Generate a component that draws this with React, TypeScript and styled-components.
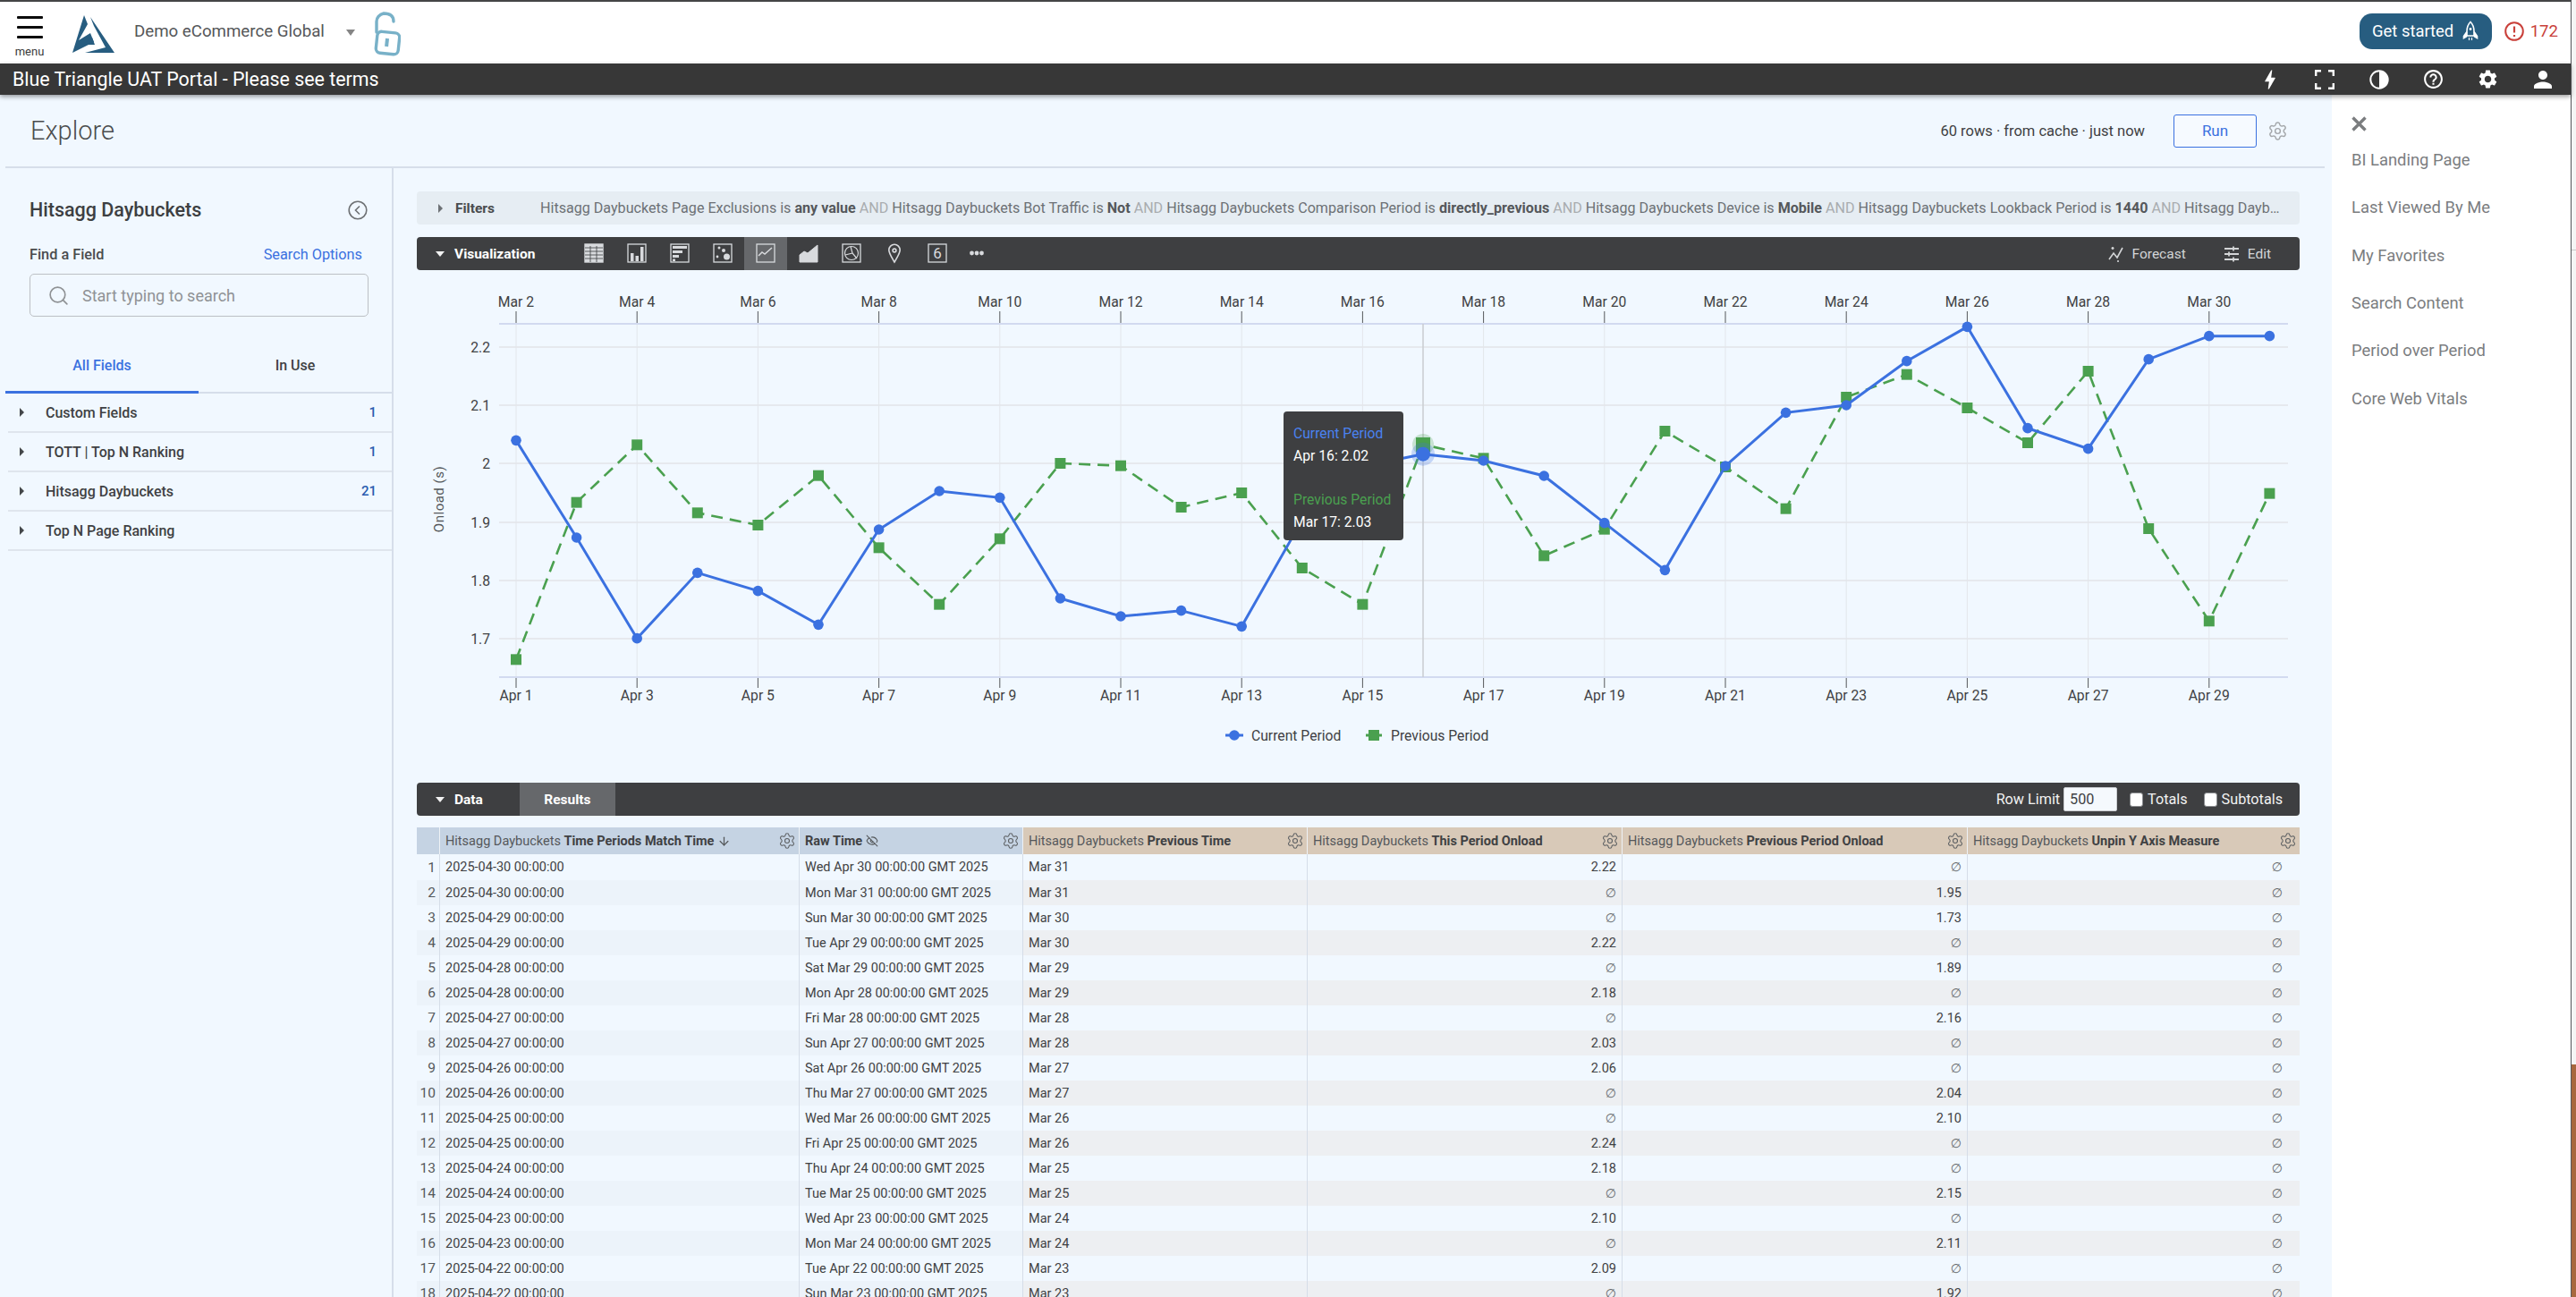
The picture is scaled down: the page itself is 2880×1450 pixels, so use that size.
import React from 'react';
import styled, { createGlobalStyle } from 'styled-components';
import { ArrowDown, EyeOff, Search, Settings } from 'lucide-react';
import { MdBolt, MdHelpOutline, MdPerson, MdSettings } from 'react-icons/md';

const GlobalStyle = createGlobalStyle`
  html, body {
    margin: 0;
    padding: 0;
    width: 2880px;
    height: 1450px;
    overflow: hidden;
    background: #f7f7f7;
    font-family: Roboto, 'Liberation Sans', sans-serif;
  }
  * { box-sizing: border-box; }
`;

const Page = styled.div`
  display: flex;
  width: 2880px;
  height: 1450px;
  overflow: hidden;
`;
const Window = styled.div`
  display: flex;
  flex-direction: column;
  width: 2875px;
  height: 1450px;
  border-top: 2px solid #444546;
  border-right: 1px solid #55585c;
  background: #fff;
`;
const EdgeStrip = styled.div`
  flex: 1;
  display: flex;
  flex-direction: column;
  background: #f5f5f5;
`;
const EdgeTop = styled.div`
  height: 280px;
  border-bottom: 1px solid #c9c9c9;
`;
const EdgeFill = styled.div`
  flex: 1;
`;
const EdgeBottom = styled.div`
  height: 260px;
  background: #a8683e;
`;

/* ---- header ---- */
const Header = styled.header`
  height: 69px;
  flex: none;
  display: flex;
  align-items: center;
  padding: 0 14px 0 18px;
  background: #fff;
`;
const MenuButton = styled.div`
  width: 30px;
  align-self: flex-start;
  margin-top: 16px;
  display: flex;
  flex-direction: column;
  align-items: center;
`;
const MenuLine = styled.span`
  display: block;
  width: 29px;
  height: 3px;
  margin-bottom: 8px;
  background: #0c0c0c;
  border-radius: 1px;
`;
const MenuLabel = styled.span`
  font-size: 13px;
  line-height: 13px;
  color: #3a3a3a;
`;
const LogoMark = styled.svg`
  width: 47px;
  height: 42px;
  margin-left: 33px;
  margin-top: 3px;
`;
const AccountName = styled.span`
  margin-left: 22px;
  margin-top: -3px;
  font-size: 18.7px;
  color: #555759;
  white-space: nowrap;
`;
const AccountCaret = styled.span`
  width: 0;
  height: 0;
  margin-left: 24px;
  border-left: 5px solid transparent;
  border-right: 5px solid transparent;
  border-top: 7px solid #858585;
`;
const Padlock = styled.svg`
  width: 30px;
  height: 50px;
  margin-left: 21px;
  margin-top: 3px;
`;
const GetStarted = styled.div`
  margin-left: auto;
  width: 148px;
  height: 40px;
  margin-top: -4px;
  display: flex;
  align-items: center;
  justify-content: center;
  gap: 10px;
  background: #275d80;
  border-radius: 14px;
  color: #fff;
  font-size: 18.4px;
`;
const AlertCount = styled.div`
  display: flex;
  align-items: center;
  gap: 7px;
  margin-left: 14px;
  margin-top: -4px;
  color: #c9403a;
  font-size: 18.6px;
`;

const InfoBar = styled.div`
  height: 35px;
  flex: none;
  position: relative;
  z-index: 2;
  display: flex;
  align-items: center;
  padding-left: 14px;
  background: #373737;
  box-shadow: 0 2px 5px rgba(0, 0, 0, 0.4);
`;
const InfoTitle = styled.span`
  color: #fff;
  font-size: 21.4px;
  white-space: nowrap;
`;
const InfoIcons = styled.div`
  margin-left: auto;
  padding-right: 1px;
  display: flex;
`;
const InfoIcon = styled.span`
  width: 61px;
  display: flex;
  align-items: center;
  justify-content: center;
  color: #fff;
`;

/* ---- body ---- */
const Body = styled.div`
  flex: 1;
  min-height: 0;
  display: flex;
  overflow: hidden;
`;
const Main = styled.main`
  width: 2607px;
  flex: none;
  display: flex;
  flex-direction: column;
  background: #f1f8ff;
`;
const PageHead = styled.div`
  height: 82px;
  flex: none;
  margin: 0 8px 0 6px;
  padding: 0 41px 0 28px;
  display: flex;
  align-items: center;
  border-bottom: 2px solid #d6deea;
`;
const PageTitle = styled.h1`
  margin: 0;
  font-size: 29px;
  font-weight: 300;
  color: #4a4c4e;
`;
const RunInfo = styled.span`
  margin-left: auto;
  font-size: 16.5px;
  color: #3f4143;
`;
const RunButton = styled.div`
  width: 93px;
  height: 37px;
  margin-left: 32px;
  display: flex;
  align-items: center;
  justify-content: center;
  border: 1.5px solid #3b71e0;
  border-radius: 3px;
  background: #f6faff;
  color: #3b71e0;
  font-size: 17px;
`;
const RunGear = styled.span`
  display: flex;
  margin-left: 12px;
  color: #a4a7aa;
`;

const Workspace = styled.div`
  flex: 1;
  min-height: 0;
  display: flex;
`;

/* ---- field picker ---- */
const FieldPanel = styled.aside`
  width: 440px;
  flex: none;
  border-right: 2px solid #d6deea;
`;
const PanelHead = styled.div`
  display: flex;
  align-items: center;
  justify-content: space-between;
  padding: 33px 27px 0 33px;
  height: 60px;
`;
const PanelTitle = styled.h2`
  margin: 0;
  font-size: 21.5px;
  font-weight: 500;
  color: #3d3f42;
`;
const BackCircle = styled.svg`
  width: 22px;
  height: 22px;
`;
const FindRow = styled.div`
  display: flex;
  justify-content: space-between;
  align-items: center;
  height: 22px;
  margin: 25px 33px 0 33px;
  font-size: 16.3px;
`;
const FindLabel = styled.span`
  font-weight: 500;
  color: #4a4c4e;
`;
const FindLink = styled.span`
  color: #3b71e0;
`;
const SearchBox = styled.div`
  height: 48px;
  margin: 11px 26px 0 33px;
  padding-left: 19px;
  display: flex;
  align-items: center;
  gap: 14px;
  border: 1.5px solid #bcc0c4;
  border-radius: 5px;
  color: #8f9295;
  font-size: 18px;
`;
const Tabs = styled.div`
  display: flex;
  height: 86px;
  margin-left: 6px;
  border-bottom: 2px solid #d6deea;
`;
const Tab = styled.div<{ $active?: boolean }>`
  width: 216px;
  height: 86px;
  display: flex;
  align-items: center;
  justify-content: center;
  padding-top: 26px;
  font-size: 16px;
  font-weight: 500;
  color: ${(p) => (p.$active ? '#3b71e0' : '#3f4143')};
  border-bottom: 3px solid ${(p) => (p.$active ? '#3b71e0' : 'transparent')};
`;
const FieldGroup = styled.div`
  height: 44px;
  margin-left: 9px;
  padding: 0 17px 0 13px;
  display: flex;
  align-items: center;
  border-bottom: 2px solid #dfe5ed;
  font-size: 16px;
  font-weight: 500;
  color: #3f4143;
`;
const RightCaret = styled.span<{ $tone?: string }>`
  width: 0;
  height: 0;
  flex: none;
  border-top: 5px solid transparent;
  border-bottom: 5px solid transparent;
  border-left: 5px solid ${(p) => p.$tone || '#44474a'};
`;
const FieldName = styled.span`
  margin-left: 24px;
`;
const FieldCount = styled.span`
  margin-left: auto;
  color: #2a5cb0;
  font-size: 15px;
`;

/* ---- explore content ---- */
const Content = styled.section`
  flex: 1;
  min-width: 0;
  padding: 26px 36px 0 26px;
  display: flex;
  flex-direction: column;
`;
const FilterBar = styled.div`
  height: 37px;
  flex: none;
  padding: 0 15px 0 24px;
  display: flex;
  align-items: center;
  background: #e6edf3;
  border-radius: 4px;
  font-size: 16.1px;
`;
const FilterTitle = styled.span`
  width: 95px;
  flex: none;
  margin-left: 14px;
  font-weight: 700;
  font-size: 15.5px;
  color: #4a4c4e;
`;
const FilterText = styled.div`
  flex: 1;
  min-width: 0;
  white-space: nowrap;
  overflow: hidden;
  text-overflow: ellipsis;
  color: #6d7175;
  b { font-weight: 700; color: #55585b; }
  i { font-style: normal; color: #a9acaf; }
`;
const SectionBar = styled.div<{ $flush?: boolean }>`
  height: 37px;
  flex: none;
  margin-top: ${(p) => (p.$flush ? '0' : '14px')};
  padding-left: 21px;
  display: flex;
  align-items: center;
  background: #3e3f41;
  border-radius: 4px;
  color: #fff;
  font-size: 15.5px;
`;
const DownCaret = styled.span`
  width: 0;
  height: 0;
  flex: none;
  border-left: 5.5px solid transparent;
  border-right: 5.5px solid transparent;
  border-top: 6.5px solid #f2f2f2;
`;
const SectionTitle = styled.span`
  margin-left: 11px;
  font-weight: 700;
`;
const VizIcons = styled.div`
  display: flex;
  align-items: stretch;
  height: 100%;
  margin-left: 42px;
`;
const VizSlot = styled.span<{ $active?: boolean }>`
  width: 48px;
  display: flex;
  align-items: center;
  justify-content: center;
  padding-bottom: 2px;
  background: ${(p) => (p.$active ? '#66686b' : 'transparent')};
`;
const BarAction = styled.span<{ $first?: boolean }>`
  display: flex;
  align-items: center;
  gap: 9px;
  margin-left: ${(p) => (p.$first ? 'auto' : '42px')};
  margin-right: ${(p) => (p.$first ? '0' : '32px')};
  color: #d3d5d7;
  font-size: 15.5px;
`;

const ChartArea = styled.div`
  position: relative;
  height: 573px;
  flex: none;
`;
const ChartSvg = styled.svg`
  display: block;
  width: 2105px;
  height: 573px;
  font-family: Roboto, 'Liberation Sans', sans-serif;
  font-size: 15.7px;
  fill: #3f4143;
`;
const Tooltip = styled.div`
  position: absolute;
  left: 969px;
  top: 158px;
  width: 134px;
  height: 144px;
  padding: 11.5px 11px 0;
  background: #3e3f41;
  border-radius: 4px;
  font-size: 15.7px;
  line-height: 25px;
  color: #fff;
`;
const TooltipLine = styled.div<{ $color?: string; $gap?: boolean }>`
  color: ${(p) => p.$color || '#fff'};
  margin-top: ${(p) => (p.$gap ? '24px' : '0')};
  white-space: nowrap;
`;

const DataTab = styled.span`
  height: 100%;
  width: 107px;
  margin-left: 41px;
  display: flex;
  align-items: center;
  justify-content: center;
  background: #66686b;
  font-weight: 700;
`;
const RowControls = styled.div`
  margin-left: auto;
  padding-right: 19px;
  display: flex;
  align-items: center;
  color: #f2f2f2;
  font-size: 16.2px;
`;
const LimitInput = styled.span`
  width: 60px;
  height: 27px;
  margin: 0 14px 0 4px;
  padding-left: 6px;
  display: flex;
  align-items: center;
  background: #f5f9fd;
  border: 1px solid #c9ccd0;
  border-radius: 2px;
  color: #3f4143;
`;
const CheckBox = styled.span`
  width: 15px;
  height: 16px;
  margin-right: 5px;
  background: #fff;
  border: 1px solid #8a8c8f;
  border-radius: 3px;
`;
const CheckLabel = styled.span`
  margin-right: 18px;
  &:last-child { margin-right: 0; }
`;

const ResultTable = styled.table`
  flex: none;
  width: 2105px;
  margin-top: 13px;
  border-collapse: separate;
  border-spacing: 0;
  table-layout: fixed;
  font-size: 14.5px;
  color: #3f4143;
`;
const HeadCell = styled.th<{ $measure?: boolean }>`
  height: 30px;
  padding: 0 3px 0 6px;
  text-align: left;
  font-weight: 400;
  color: #55585b;
  white-space: nowrap;
  background: ${(p) => (p.$measure ? '#d8c9b8' : '#c5d3e3')};
  border-left: 1px solid #eef2f6;
  b { font-weight: 700; color: #3f4143; }
  &:first-child { border-left: 0; }
`;
const HeadInner = styled.div`
  display: flex;
  align-items: center;
  gap: 4px;
`;
const HeadGear = styled.span`
  margin-left: auto;
  display: flex;
  color: #5c5f62;
`;
const BodyRow = styled.tr`
  &:first-child td { height: 29px; }
`;
const BodyCell = styled.td<{ $tone: string; $right?: boolean; $pad?: number }>`
  height: 28px;
  padding: 0 ${(p) => p.$pad ?? 6}px 0 6px;
  white-space: nowrap;
  text-align: ${(p) => (p.$right ? 'right' : 'left')};
  background: ${(p) => p.$tone};
  border-left: 1px solid #d5dde8;
  &:first-child { border-left: 0; }
`;
const RowIndex = styled.td<{ $tone: string }>`
  height: 28px;
  padding-right: 4px;
  text-align: right;
  font-size: 15.5px;
  color: #55585b;
  background: ${(p) => p.$tone};
`;
const NullMark = styled.span`
  font-size: 14px;
  color: #66696c;
  font-family: 'DejaVu Sans', sans-serif;
`;

/* ---- right hand nav ---- */
const SideNav = styled.nav`
  flex: 1;
  padding: 24px 0 0 22px;
  background: #fff;
`;
const CloseMark = styled.svg`
  display: block;
  width: 17px;
  height: 17px;
  margin-bottom: 5px;
`;
const NavItem = styled.div`
  height: 53.3px;
  display: flex;
  align-items: center;
  font-size: 18.4px;
  color: #7b7d7f;
`;

/* ---- drawings ---- */
const iconStroke = '#d8dadd';

const Frame = () => <rect x="1" y="1" width="20" height="20" fill="none" stroke={iconStroke} strokeWidth="1.3" />;

const VizIcon: React.FC<{ kind: string }> = ({ kind }) => {
  const inner: Record<string, React.ReactNode> = {
    table: (
      <g stroke={iconStroke} strokeWidth="1.4" fill="none">
        <rect x="1" y="1" width="20" height="20" fill={iconStroke} />
        {[5, 9, 13, 17].map((y) => <line key={y} x1="1" x2="21" y1={y} y2={y} stroke="#3e3f41" strokeWidth="0.8" />)}
        {[7, 14].map((x) => <line key={x} y1="3" y2="21" x1={x} x2={x} stroke="#3e3f41" strokeWidth="0.8" />)}
      </g>
    ),
    bar: (
      <g fill={iconStroke}>
        <Frame />
        <rect x="4" y="11" width="3.5" height="9" />
        <rect x="9.5" y="14" width="3.5" height="6" />
        <rect x="15" y="4" width="3.5" height="16" />
      </g>
    ),
    hbar: (
      <g fill={iconStroke}>
        <Frame />
        <rect x="3" y="3" width="16" height="3" />
        <rect x="3" y="8" width="11" height="3" />
        <rect x="3" y="13" width="7" height="3" />
        <rect x="3" y="17.5" width="3" height="2.5" />
      </g>
    ),
    scatter: (
      <g fill={iconStroke}>
        <Frame />
        <circle cx="7" cy="5" r="1.5" />
        <circle cx="12" cy="8" r="2" />
        <circle cx="5" cy="15" r="1.4" />
        <circle cx="15.5" cy="15" r="3.5" />
      </g>
    ),
    line: (
      <g fill="none" stroke={iconStroke}>
        <Frame />
        <path d="M3 14 L7 10 L10 12 L18 5" strokeWidth="1.5" />
      </g>
    ),
    area: <path d="M1 21 V13 L6 9 L10 11 L21 2 V21 Z" fill={iconStroke} stroke={iconStroke} />,
    pie: (
      <g fill="none" stroke={iconStroke} strokeWidth="1.2">
        <Frame />
        <circle cx="11" cy="11" r="7.5" />
        <path d="M10 3.5 L12 11 L17 17 M12 11 L4 13" />
      </g>
    ),
    pin: (
      <g fill="none" stroke={iconStroke} strokeWidth="1.6">
        <path d="M11 21 C7 14 4.8 11 4.8 7.5 A6.2 6.2 0 0 1 17.2 7.5 C17.2 11 15 14 11 21 Z" />
        <circle cx="11" cy="8" r="1.9" />
      </g>
    ),
    single: (
      <g>
        <Frame />
        <text x="11" y="17" textAnchor="middle" fontSize="17" fill={iconStroke} fontFamily="Roboto">6</text>
      </g>
    ),
    more: (
      <g fill={iconStroke}>
        <circle cx="1.5" cy="11" r="2.4" />
        <circle cx="7" cy="11" r="2.4" />
        <circle cx="12.5" cy="11" r="2.4" />
      </g>
    ),
  };
  return <svg width="22" height="22" viewBox="0 0 22 22" overflow="visible">{inner[kind]}</svg>;
};

const RocketIcon = () => (
  <svg width="18" height="24" viewBox="0 0 18 24" fill="none" stroke="#fff" strokeWidth="1.6">
    <path d="M9 1.5 C12.5 5 13 9 13 12 V17 H5 V12 C5 9 5.5 5 9 1.5 Z" />
    <circle cx="9" cy="9.5" r="1.4" fill="#fff" stroke="none" />
    <path d="M5 12.5 L1.5 17.5 V19.5 L5 17.5 M13 12.5 L16.5 17.5 V19.5 L13 17.5" fill="#fff" />
    <path d="M7.5 19 V22 M10.5 19 V22" strokeWidth="1.2" />
  </svg>
);

const ContrastIcon = () => (
  <svg width="22" height="22" viewBox="0 0 22 22">
    <circle cx="11" cy="11" r="9.7" fill="none" stroke="#fff" strokeWidth="2" />
    <path d="M11 1.3 A9.7 9.7 0 0 1 11 20.7 Z" fill="#fff" />
  </svg>
);

const FullscreenIcon = () => (
  <svg width="22" height="22" viewBox="0 0 22 22" fill="none" stroke="#fff" strokeWidth="2.4">
    <path d="M1.2 7 V1.2 H7 M15 1.2 H20.8 V7 M20.8 15 V20.8 H15 M7 20.8 H1.2 V15" />
  </svg>
);

const dayX = (day: number) => 577 + (day - 1) * 67.6;
const zoomY = (z: number) => 350 + z / 3;

const currentPeriod = [433, 759, 1097, 877, 938, 1051, 732, 603, 625, 963, 1023, 1004, 1057, 700, 520, 479, 501, 552, 710, 868, 519, 340, 315, 167, 52, 392, 461, 161, 83, 83];
const previousPeriod = [1168, 641, 448, 676, 717, 551, 793, 983, 763, 510, 518, 657, 609, 861, 983, 447, 493, 820, 731, 402, 522, 662, 288, 212, 324, 441, 201, 729, 1039, 611];
const yTicks: [string, number][] = [['2.2', 390], ['2.1', 455], ['2', 520], ['1.9', 586], ['1.8', 651], ['1.7', 716]];
const BLUE = '#3b71e0';
const GREEN = '#4aa04f';

const toPoints = (list: number[]) => list.map((z, i) => `${dayX(i + 1)},${zoomY(z)}`).join(' ');

const PeriodChart = () => {
  const odd = Array.from({ length: 15 }, (_, i) => i * 2 + 1);
  return (
    <ChartSvg viewBox="466 304 2105 573">
      {yTicks.map(([label, y]) => (
        <g key={label}>
          <line x1="558" x2="2558" y1={y} y2={y} stroke="#e6e9ee" strokeWidth="2" />
          <text x="548" y={y + 5.5} textAnchor="end">{label}</text>
        </g>
      ))}
      {odd.map((d) => (
        <g key={d}>
          <line x1={dayX(d)} x2={dayX(d)} y1="364" y2="759" stroke="#e3e6eb" />
          <line x1={dayX(d)} x2={dayX(d)} y1="350" y2="364" stroke="#55585b" />
          <line x1={dayX(d)} x2={dayX(d)} y1="759" y2="771" stroke="#55585b" />
          <text x={dayX(d)} y="345" textAnchor="middle">Mar {d + 1}</text>
          <text x={dayX(d)} y="785" textAnchor="middle">Apr {d}</text>
        </g>
      ))}
      <line x1="558" x2="2558" y1="364" y2="364" stroke="#d2daf0" strokeWidth="2" />
      <line x1="558" x2="2558" y1="759" y2="759" stroke="#d2daf0" strokeWidth="2" />
      <line x1={dayX(16)} x2={dayX(16)} y1="364" y2="759" stroke="#c9ccd0" strokeWidth="1.5" />
      <text transform="translate(496 560) rotate(-90)" textAnchor="middle" fontSize="15" letterSpacing="0.5" fill="#55585b">Onload (s)</text>

      <polyline points={toPoints(previousPeriod)} fill="none" stroke={GREEN} strokeWidth="2.6" strokeDasharray="13 8" />
      {previousPeriod.map((z, i) => (
        <rect key={i} x={dayX(i + 1) - 6} y={zoomY(z) - 6} width="12" height="12" fill={GREEN} />
      ))}
      <polyline points={toPoints(currentPeriod)} fill="none" stroke={BLUE} strokeWidth="3" />
      {currentPeriod.map((z, i) => (
        <circle key={i} cx={dayX(i + 1)} cy={zoomY(z)} r="5.8" fill={BLUE} />
      ))}
      <circle cx={dayX(16)} cy={zoomY(447)} r="12" fill={GREEN} opacity="0.25" />
      <rect x={dayX(16) - 8} y={zoomY(447) - 8} width="16" height="16" fill={GREEN} />
      <circle cx={dayX(16)} cy={zoomY(479)} r="13" fill={BLUE} opacity="0.25" />
      <circle cx={dayX(16)} cy={zoomY(479)} r="8" fill={BLUE} />

      <line x1="1370" x2="1390" y1="824" y2="824" stroke={BLUE} strokeWidth="3" />
      <circle cx="1380" cy="824" r="5.8" fill={BLUE} />
      <text x="1399" y="829.5">Current Period</text>
      <line x1="1527" x2="1546" y1="824" y2="824" stroke={GREEN} strokeWidth="3" strokeDasharray="3 2" />
      <rect x="1530" y="818" width="12" height="12" fill={GREEN} />
      <text x="1555" y="829.5">Previous Period</text>
    </ChartSvg>
  );
};

type Row = [string, string, string, string, string];
const rows: Row[] = [
  ['2025-04-30', 'Wed Apr 30', 'Mar 31', '2.22', ''],
  ['2025-04-30', 'Mon Mar 31', 'Mar 31', '', '1.95'],
  ['2025-04-29', 'Sun Mar 30', 'Mar 30', '', '1.73'],
  ['2025-04-29', 'Tue Apr 29', 'Mar 30', '2.22', ''],
  ['2025-04-28', 'Sat Mar 29', 'Mar 29', '', '1.89'],
  ['2025-04-28', 'Mon Apr 28', 'Mar 29', '2.18', ''],
  ['2025-04-27', 'Fri Mar 28', 'Mar 28', '', '2.16'],
  ['2025-04-27', 'Sun Apr 27', 'Mar 28', '2.03', ''],
  ['2025-04-26', 'Sat Apr 26', 'Mar 27', '2.06', ''],
  ['2025-04-26', 'Thu Mar 27', 'Mar 27', '', '2.04'],
  ['2025-04-25', 'Wed Mar 26', 'Mar 26', '', '2.10'],
  ['2025-04-25', 'Fri Apr 25', 'Mar 26', '2.24', ''],
  ['2025-04-24', 'Thu Apr 24', 'Mar 25', '2.18', ''],
  ['2025-04-24', 'Tue Mar 25', 'Mar 25', '', '2.15'],
  ['2025-04-23', 'Wed Apr 23', 'Mar 24', '2.10', ''],
  ['2025-04-23', 'Mon Mar 24', 'Mar 24', '', '2.11'],
  ['2025-04-22', 'Tue Apr 22', 'Mar 23', '2.09', ''],
  ['2025-04-22', 'Sun Mar 23', 'Mar 23', '', '1.92'],
];

const Gear = () => (
  <HeadGear>
    <Settings size={20} strokeWidth={1.3} />
  </HeadGear>
);

const Nullable: React.FC<{ value: string }> = ({ value }) => (value ? <>{value}</> : <NullMark>∅</NullMark>);

const fieldGroups: [string, string][] = [
  ['Custom Fields', '1'],
  ['TOTT | Top N Ranking', '1'],
  ['Hitsagg Daybuckets', '21'],
  ['Top N Page Ranking', ''],
];
const navLinks = ['BI Landing Page', 'Last Viewed By Me', 'My Favorites', 'Search Content', 'Period over Period', 'Core Web Vitals'];
const vizKinds = ['table', 'bar', 'hbar', 'scatter', 'line', 'area', 'pie', 'pin', 'single', 'more'];

export default function App() {
  return (
    <>
      <GlobalStyle />
      <Page>
        <Window>
          <Header>
            <MenuButton>
              <MenuLine />
              <MenuLine />
              <MenuLine />
              <MenuLabel>menu</MenuLabel>
            </MenuButton>
            <LogoMark viewBox="0 0 47 42">
              <path d="M13 0 L17 10 L7 28 L20 20 L24 30 L0 42 Z" fill="#275d80" />
              <path d="M20 2 L47 42 L14 42 L37 36 L24 12 Z" fill="#275d80" />
              <path d="M11 33 L22 25 L25 33 Z" fill="#275d80" />
            </LogoMark>
            <AccountName>Demo eCommerce Global</AccountName>
            <AccountCaret />
            <Padlock viewBox="0 0 30 50" fill="none" stroke="#78b1c8" strokeWidth="3.4">
              <path d="M22 11 C22 5 18 2 11 2 C6 3 3 7 3 11 L3 23" strokeLinecap="round" />
              <rect x="3" y="23" width="25" height="24" rx="5" transform="rotate(6 15 35)" />
              <rect x="12.5" y="30" width="4" height="9" fill="#78b1c8" stroke="none" transform="rotate(6 15 35)" />
            </Padlock>
            <GetStarted>
              Get started
              <RocketIcon />
            </GetStarted>
            <AlertCount>
              <svg width="22" height="22" viewBox="0 0 22 22" fill="none" stroke="#c9403a" strokeWidth="2">
                <circle cx="11" cy="11" r="9.8" />
                <path d="M11 5.5 V12.5 M11 15 V17" strokeWidth="2.2" />
              </svg>
              172
            </AlertCount>
          </Header>
          <InfoBar>
            <InfoTitle>Blue Triangle UAT Portal - Please see terms</InfoTitle>
            <InfoIcons>
              <InfoIcon><MdBolt size={28} /></InfoIcon>
              <InfoIcon><FullscreenIcon /></InfoIcon>
              <InfoIcon><ContrastIcon /></InfoIcon>
              <InfoIcon><MdHelpOutline size={25} /></InfoIcon>
              <InfoIcon><MdSettings size={25} /></InfoIcon>
              <InfoIcon><MdPerson size={30} /></InfoIcon>
            </InfoIcons>
          </InfoBar>
          <Body>
            <Main>
              <PageHead>
                <PageTitle>Explore</PageTitle>
                <RunInfo>60 rows · from cache · just now</RunInfo>
                <RunButton>Run</RunButton>
                <RunGear><Settings size={23} strokeWidth={1.5} /></RunGear>
              </PageHead>
              <Workspace>
                <FieldPanel>
                  <PanelHead>
                    <PanelTitle>Hitsagg Daybuckets</PanelTitle>
                    <BackCircle viewBox="0 0 22 22" fill="none" stroke="#6e7174" strokeWidth="1.6">
                      <circle cx="11" cy="11" r="9.8" />
                      <path d="M13 6.5 L8.5 11 L13 15.5" />
                    </BackCircle>
                  </PanelHead>
                  <FindRow>
                    <FindLabel>Find a Field</FindLabel>
                    <FindLink>Search Options</FindLink>
                  </FindRow>
                  <SearchBox>
                    <Search size={25} strokeWidth={1.6} />
                    Start typing to search
                  </SearchBox>
                  <Tabs>
                    <Tab $active>All Fields</Tab>
                    <Tab>In Use</Tab>
                  </Tabs>
                  {fieldGroups.map(([name, count]) => (
                    <FieldGroup key={name}>
                      <RightCaret />
                      <FieldName>{name}</FieldName>
                      <FieldCount>{count}</FieldCount>
                    </FieldGroup>
                  ))}
                </FieldPanel>
                <Content>
                  <FilterBar>
                    <RightCaret $tone="#6d7175" />
                    <FilterTitle>Filters</FilterTitle>
                    <FilterText>
                      Hitsagg Daybuckets Page Exclusions is <b>any value</b> <i>AND</i> Hitsagg Daybuckets Bot Traffic is <b>Not</b> <i>AND</i> Hitsagg Daybuckets Comparison Period is <b>directly_previous</b> <i>AND</i> Hitsagg Daybuckets Device is <b>Mobile</b> <i>AND</i> Hitsagg Daybuckets Lookback Period is <b>1440</b> <i>AND</i> Hitsagg Daybuckets Time Periods Match Time is <b>any value</b>
                    </FilterText>
                  </FilterBar>
                  <SectionBar>
                    <DownCaret />
                    <SectionTitle>Visualization</SectionTitle>
                    <VizIcons>
                      {vizKinds.map((kind) => (
                        <VizSlot key={kind} $active={kind === 'line'}>
                          <VizIcon kind={kind} />
                        </VizSlot>
                      ))}
                    </VizIcons>
                    <BarAction $first>
                      <svg width="18" height="20" viewBox="0 0 18 20" fill="none" stroke="#d3d5d7" strokeWidth="1.6">
                        <path d="M1 16 L6 9 L10 14 L16 3" />
                        <path d="M5 2 L5 5 M3.5 3.5 L6.5 3.5 M11 17 L11 19" />
                      </svg>
                      Forecast
                    </BarAction>
                    <BarAction>
                      <svg width="18" height="20" viewBox="0 0 18 20" fill="none" stroke="#d3d5d7" strokeWidth="1.8">
                        <path d="M1 4 H17 M1 10 H17 M1 16 H17 M11 1.5 V6.5 M6 7.5 V12.5 M11 13.5 V18.5" />
                      </svg>
                      Edit
                    </BarAction>
                  </SectionBar>
                  <ChartArea>
                    <PeriodChart />
                    <Tooltip>
                      <TooltipLine $color="#4a82f0">Current Period</TooltipLine>
                      <TooltipLine>Apr 16: 2.02</TooltipLine>
                      <TooltipLine $color={GREEN} $gap>Previous Period</TooltipLine>
                      <TooltipLine>Mar 17: 2.03</TooltipLine>
                    </Tooltip>
                  </ChartArea>
                  <SectionBar $flush>
                    <DownCaret />
                    <SectionTitle>Data</SectionTitle>
                    <DataTab>Results</DataTab>
                    <RowControls>
                      Row Limit
                      <LimitInput>500</LimitInput>
                      <CheckBox />
                      <CheckLabel>Totals</CheckLabel>
                      <CheckBox />
                      <CheckLabel>Subtotals</CheckLabel>
                    </RowControls>
                  </SectionBar>
                  <ResultTable>
                    <colgroup>
                      <col width="25" />
                      <col width="402" />
                      <col width="250" />
                      <col width="318" />
                      <col width="352" />
                      <col width="386" />
                      <col width="372" />
                    </colgroup>
                    <thead>
                      <tr>
                        <HeadCell />
                        <HeadCell>
                          <HeadInner>
                            <span>Hitsagg Daybuckets <b>Time Periods Match Time</b></span>
                            <ArrowDown size={15} strokeWidth={2} />
                            <Gear />
                          </HeadInner>
                        </HeadCell>
                        <HeadCell>
                          <HeadInner>
                            <b>Raw Time</b>
                            <EyeOff size={14} strokeWidth={1.8} />
                            <Gear />
                          </HeadInner>
                        </HeadCell>
                        <HeadCell $measure>
                          <HeadInner>
                            <span>Hitsagg Daybuckets <b>Previous Time</b></span>
                            <Gear />
                          </HeadInner>
                        </HeadCell>
                        <HeadCell $measure>
                          <HeadInner>
                            <span>Hitsagg Daybuckets <b>This Period Onload</b></span>
                            <Gear />
                          </HeadInner>
                        </HeadCell>
                        <HeadCell $measure>
                          <HeadInner>
                            <span>Hitsagg Daybuckets <b>Previous Period Onload</b></span>
                            <Gear />
                          </HeadInner>
                        </HeadCell>
                        <HeadCell $measure>
                          <HeadInner>
                            <span>Hitsagg Daybuckets <b>Unpin Y Axis Measure</b></span>
                            <Gear />
                          </HeadInner>
                        </HeadCell>
                      </tr>
                    </thead>
                    <tbody>
                      {rows.map((row, i) => {
                        const striped = i % 2 === 1;
                        const dimTone = striped ? '#ecf3fa' : '#f1f8ff';
                        const calcTone = striped ? '#edeff2' : '#f1f8ff';
                        return (
                          <BodyRow key={i}>
                            <RowIndex $tone={dimTone}>{i + 1}</RowIndex>
                            <BodyCell $tone={dimTone}>{row[0]} 00:00:00</BodyCell>
                            <BodyCell $tone={dimTone}>{row[1]} 00:00:00 GMT 2025</BodyCell>
                            <BodyCell $tone={calcTone}>{row[2]}</BodyCell>
                            <BodyCell $tone={calcTone} $right><Nullable value={row[3]} /></BodyCell>
                            <BodyCell $tone={calcTone} $right><Nullable value={row[4]} /></BodyCell>
                            <BodyCell $tone={calcTone} $right $pad={19}><Nullable value="" /></BodyCell>
                          </BodyRow>
                        );
                      })}
                    </tbody>
                  </ResultTable>
                </Content>
              </Workspace>
            </Main>
            <SideNav>
              <CloseMark viewBox="0 0 17 17" stroke="#7b7d7f" strokeWidth="3.4">
                <path d="M1.5 1.5 L15.5 15.5 M15.5 1.5 L1.5 15.5" />
              </CloseMark>
              {navLinks.map((link) => (
                <NavItem key={link}>{link}</NavItem>
              ))}
            </SideNav>
          </Body>
        </Window>
        <EdgeStrip>
          <EdgeTop />
          <EdgeFill />
          <EdgeBottom />
        </EdgeStrip>
      </Page>
    </>
  );
}
